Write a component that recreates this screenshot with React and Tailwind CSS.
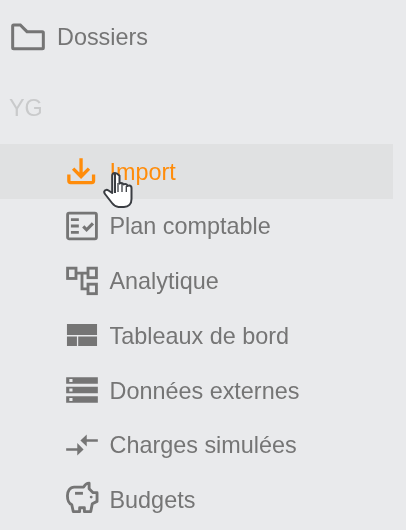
const S = { fill: "none", stroke: "currentColor", strokeWidth: 1.8 };

const items = [
  {
    label: "Import",
    active: true,
    icon: (
      <g {...S} strokeWidth="2.100">
        <path d="M11.400 4v11.500M6.400 10.500l5 5 5-5" />
        <path d="M3.700 14.200v4c0 .7.400 1.100 1.100 1.100h13.400c.7 0 1.100-.4 1.100-1.100v-4" />
      </g>
    ),
  },
  {
    label: "Plan comptable",
    icon: (
      <g {...S}>
        <rect x="2.900" y="3.900" width="18.200" height="16.200" rx="1" />
        <path d="M5 8h5M5 12h5M5 16h5" />
        <path d="M12.800 12.300l2.100 2.100 4-4" strokeWidth="2" />
      </g>
    ),
  },
  {
    label: "Analytique",
    icon: (
      <g {...S}>
        <rect x="2.900" y="3.900" width="5.300" height="6.500" />
        <rect x="15.800" y="3.900" width="5.300" height="6" />
        <rect x="15.800" y="14" width="5.300" height="6" />
        <path d="M8.200 7h7.600M12 7v10h3.800" />
      </g>
    ),
  },
  {
    label: "Tableaux de bord",
    icon: <path d="M2.500 5h19v7h-19zM2.500 12.900h6.300V19H2.500zM9.600 12.900h11.900V19H9.600z" fill="currentColor" />,
  },
  {
    label: "Données externes",
    icon: <path d="M2 20h20v-4H2v4zm2-3h2v2H4v-2zM2 4v4h20V4H2zm4 3H4V5h2v2zm-4 7h20v-4H2v4zm2-3h2v2H4v-2z" fill="currentColor" />,
  },
  {
    label: "Charges simulées",
    icon: <path d="M9.010 14H2v1.600h7.010v3L13 14.800l-3.990-4v3.200zm5.980-1v-3H22V8.400h-7.010V5.400L11 9.200l3.990 3.800z" fill="currentColor" />,
  },
  {
    label: "Budgets",
    icon: (
      <g {...S} strokeLinejoin="round">
        <path d="M7 4.500h6C13.800 3 15 2 16.500 2v3.500L19 8h2.500v5.500l-3 1.500-1 5h-4v-2.500h-3V20h-4l-1-4.500C4 15 2.800 13 2.800 10 2.800 7 4.500 4.500 7 4.500z" />
        <path d="M7.600 8.400h5" />
        <circle cx="17.800" cy="10.800" r=".9" fill="currentColor" stroke="none" />
      </g>
    ),
  },
];

function Svg({ className, children }) {
  return (
    <svg viewBox="0 0 24 24" className={className} aria-hidden="true">
      {children}
    </svg>
  );
}

function Pointer() {
  return (
    <svg viewBox="0 0 30 36" className="absolute left-[103px] top-[28px] w-[30px] h-[36px]" aria-hidden="true">
      <path
        d="M12 1c-1.700 0-2.800 1.200-2.800 2.800V21L5.500 18.500c-1.500-1-3.300-.8-4 .5-.6 1-.3 2 .5 3L9 31c2 2.500 3.500 4 6.500 4H21c4.500 0 7.500-3 7.500-8V16c0-1.500-1-2.500-2.300-2.500-.7 0-1.200.2-1.700.5-.3-1.300-1.200-2-2.400-2-.7 0-1.200.2-1.600.5-.4-1-1.200-1.500-2.300-1.500-.7 0-1.300.2-1.700.6V3.800C15 2.200 13.700 1 12 1z"
        fill="#fff"
        stroke="#3a3d42"
        strokeWidth="2"
        strokeLinejoin="round"
      />
      <path d="M15 11v9M19 12v8M23.300 14v6" stroke="#3a3d42" strokeWidth="1.300" fill="none" />
      <path d="M12 2v19" stroke="#3a3d42" strokeWidth="2" fill="none" />
    </svg>
  );
}

export default function App() {
  return (
    <div className="w-[406px] h-[530px] overflow-hidden bg-[#e9eaec] pr-[13px] text-[#757575] text-[23.400px] font-['Liberation_Sans',Arial,sans-serif] blur-[0.4px]">
      <div className="flex items-center h-[36px] mt-[19px] pl-[8px]">
        <Svg className="w-[40px] h-[40px] shrink-0">
          <path
            d="M9.400 6.800l2 2h9.200c.4 0 .6.200.6.600v9c0 .4-.2.600-.6.600H3.400c-.4 0-.6-.2-.6-.6V5.400c0-.4.200-.6.600-.6h4z"
            fill="none"
            stroke="currentColor"
            strokeWidth="1.800"
          />
        </Svg>
        <span className="ml-[9px] pt-[2px]">Dossiers</span>
      </div>
      <div className="h-[36px] mt-[34px] flex items-center pl-[9px] pt-[3px] text-[#c9cacb]">YG</div>
      <div className="flex flex-col mt-[19px]">
        {items.map((it) => (
          <div
            key={it.label}
            className={
              it.active
                ? "relative flex items-center h-[54.700px] pl-[63px] bg-[#e0e1e2] text-[#ff8c0a]"
                : "relative flex items-center h-[54.700px] pl-[63px]"
            }
          >
            <Svg className="w-[38px] h-[38px] shrink-0">{it.icon}</Svg>
            <span className="ml-[8.500px] pt-[2px]">{it.label}</span>
            {it.active && <Pointer />}
          </div>
        ))}
      </div>
    </div>
  );
}
